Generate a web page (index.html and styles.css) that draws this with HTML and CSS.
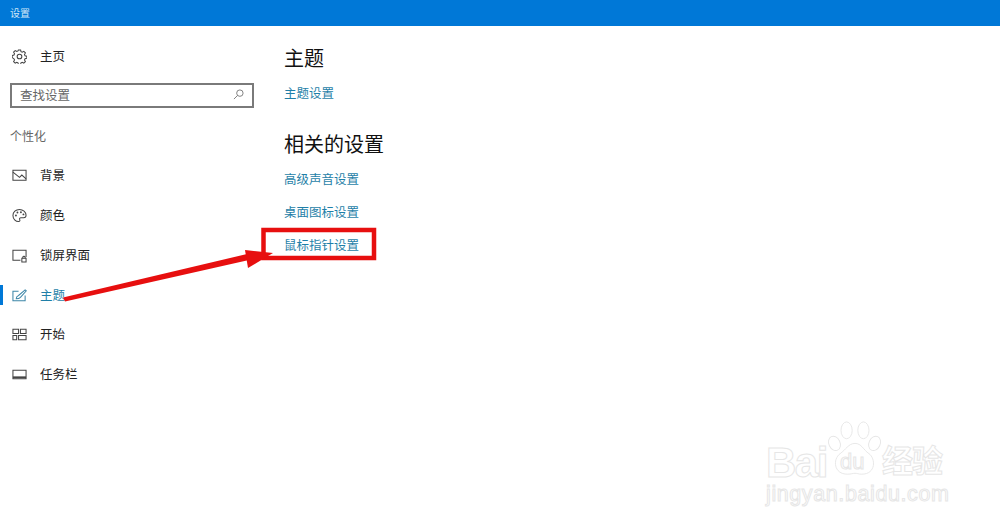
FILE: index.html
```html
<!DOCTYPE html>
<html>
  <head>
    <meta charset="utf-8" />
    <link rel="stylesheet" href="styles.css">
  </head>
  <body>
    <div class="titlebar">设置</div>

    <div class="main">
      <div class="sidebar">
        <div class="nav-item home">
          <svg class="nav-icon" viewBox="0 0 16 16"><circle cx="8" cy="8" r="2.5"/><path d="M6.8 1h2.400l.4 1.900 1.300.6 1.700-1 1.700 1.700-1 1.700.6 1.300 1.900.4v2.400l-1.900.4-.6 1.300 1 1.700-1.700 1.700-1.700-1-1.300.6-.4 1.900H6.800l-.4-1.900-1.300-.6-1.700 1-1.700-1.700 1-1.700-.6-1.300L.2 9.200V6.800l1.900-.4.6-1.300-1-1.700 1.700-1.700 1.700 1 1.300-.6z"/></svg>
          <span>主页</span>
        </div>

        <div class="search-box">
          <span>查找设置</span>
          <svg class="search-icon" viewBox="0 0 12 12"><circle cx="7.500" cy="4.500" r="3.500"/><path d="M5 7 1 11"/></svg>
        </div>

        <div class="group-label">个性化</div>

        <div class="nav-item">
          <svg class="nav-icon" viewBox="0 0 16 16"><path d="M1 2.500h14v10.500H1z"/><path d="M1 4.500 8 10l2.500-2.500 4.500 4"/></svg>
          <span>背景</span>
        </div>
        <div class="nav-item">
          <svg class="nav-icon" viewBox="0 0 16 16"><path d="M8 1.500C4 1.500 1 4.300 1 8s2.900 6.500 6 6.500c1.500 0 1.700-1.200 1.200-2.200-.5-1.100.2-2 1.300-2h3c1.500 0 2.500-1 2.500-2.600 0-3.400-3.300-6.200-7-6.200z"/><circle class="dot" cx="4.200" cy="8" r="1"/><circle class="dot" cx="5.800" cy="4.800" r="1"/><circle class="dot" cx="9.500" cy="4.500" r="1"/><circle class="dot" cx="12.200" cy="6.800" r="1"/></svg>
          <span>颜色</span>
        </div>
        <div class="nav-item">
          <svg class="nav-icon" viewBox="0 0 16 16"><path d="M9 13H1V2.500h14v7"/><path d="M10.500 11h4.500v4h-4.500z"/><path d="M11.500 11V9.800a1.300 1.300 0 0 1 2.500 0V11"/></svg>
          <span>锁屏界面</span>
        </div>
        <div class="nav-item active">
          <svg class="nav-icon" viewBox="0 0 16 16"><path d="M7 3.500H1v10h13V8"/><path d="M4.500 11.500c0-2 1-3 2.500-3.500l7-6 1.300 1-6.300 7c-1 1-2.500 1.500-4.500 1.500z"/></svg>
          <span>主题</span>
        </div>
        <div class="nav-item">
          <svg class="nav-icon" viewBox="0 0 16 16"><path d="M1 2.500h6v4.500H1zM9 2.500h6v4.500H9zM1 9h4v4.500H1zM7 9h8v4.500H7z"/></svg>
          <span>开始</span>
        </div>
        <div class="nav-item">
          <svg class="nav-icon" viewBox="0 0 16 16"><path d="M1 3.500h14v9H1z"/><path class="thick" d="M1 11h14"/></svg>
          <span>任务栏</span>
        </div>
      </div>

      <div class="content">
        <h2>主题</h2>
        <a class="link">主题设置</a>

        <h2 class="related">相关的设置</h2>
        <a class="link">高级声音设置</a>
        <a class="link">桌面图标设置</a>
        <a class="link">鼠标指针设置</a>
      </div>
    </div>

    <!-- red annotation drawn over the page -->
    <svg class="annotation" viewBox="0 0 1000 526">
      <rect x="263.500" y="230" width="110.500" height="28" fill="none" stroke="#e70f0f" stroke-width="4.500"/>
      <path d="M63 297.500 247 254 249 260 65 301.500z" fill="#e70f0f"/>
      <path d="M245 250 273 253 248 268z" fill="#e70f0f"/>
    </svg>

    <div class="watermark">
      <div class="wm-top">
        <span class="wm-bai">Bai</span>
        <svg class="wm-paw" viewBox="0 0 60 62">
          <ellipse cx="8" cy="25" rx="6" ry="8" transform="rotate(-25 8 25)"/>
          <ellipse cx="21" cy="11" rx="6" ry="9"/>
          <ellipse cx="39" cy="11" rx="6" ry="9"/>
          <ellipse cx="51" cy="25" rx="6" ry="8" transform="rotate(25 51 25)"/>
          <path d="M30 25c7 0 9 7 15 11 7 5 8 22-8 22-3 0-5-1-7-1s-4 1-8 1C7 58 6 42 14 36c6-4 9-11 16-11z"/>
        </svg>
        <span class="wm-du">du</span>
        <span class="wm-cn">经验</span>
      </div>
      <div class="wm-url">jingyan.baidu.com</div>
    </div>
  </body>
</html>
```

FILE: styles.css
```css
html,
body {
  height: 100%;
}

body {
  position: relative;
  margin: 0;
  overflow: hidden;
  font-family: "Noto Sans CJK SC", "Liberation Sans", sans-serif;
  font-size: 12.5px;
  background: white;
  color: #222;
}

.titlebar {
  height: 26px;
  padding-left: 10px;
  box-sizing: border-box;
  background: #0078d7;
  color: #cfe6f7;
  font-size: 10px;
  line-height: 26px;
}

.main {
  display: flex;
}

/* Sidebar */
.sidebar {
  width: 284px;
  box-sizing: border-box;
}

.nav-item {
  display: flex;
  align-items: center;
  height: 40px;
  padding-left: 12px;
  box-sizing: border-box;
}

.nav-item span {
  margin-left: 13px;
  line-height: 40px;
}

.nav-item.home {
  height: 20px;
  margin: 20px 0 17px;
}

.nav-icon {
  width: 15px;
  height: 15px;
  flex: none;
  fill: none;
  stroke: #444;
  stroke-width: 1.1;
}

.nav-icon .dot {
  fill: #444;
  stroke: none;
}

.nav-icon .thick {
  stroke-width: 2;
}

.nav-item.active {
  position: relative;
  margin-bottom: -1px;
  color: #1f7fa8;
}

.nav-item.active .nav-icon {
  stroke: #3d86a8;
}

.nav-item.active::before {
  content: "";
  position: absolute;
  left: 0;
  top: 10px;
  width: 3px;
  height: 20px;
  background: #0078d7;
}

.search-box {
  display: flex;
  align-items: center;
  justify-content: space-between;
  width: 244px;
  height: 25px;
  margin-left: 10px;
  padding: 0 8px 2px 8px;
  box-sizing: border-box;
  border: 2px solid #7a7a7a;
  color: #666;
}

.search-icon {
  width: 11px;
  height: 11px;
  fill: none;
  stroke: #777;
  stroke-width: 1;
}

.group-label {
  margin: 19px 0 10px 10px;
  color: #666;
  font-size: 12px;
  line-height: 18px;
}

/* Content */
.content {
  display: flex;
  flex-direction: column;
  align-items: flex-start;
  padding-top: 17px;
}

.content h2 {
  margin: 0 0 10px 0;
  font-size: 20px;
  font-weight: 400;
  line-height: 30px;
  color: #111;
}

.content h2.related {
  margin-top: 13px;
}

.link {
  height: 33px;
  line-height: 20px;
  color: #1f7fa8;
}

/* Annotation */
.annotation {
  position: absolute;
  left: 0;
  top: 0;
  width: 1000px;
  height: 526px;
}

/* Watermark */
.watermark {
  position: absolute;
  left: 766px;
  top: 418px;
  width: 190px;
  color: white;
  -webkit-text-stroke: 1px #e6e6e6;
  font-family: "Liberation Sans", sans-serif;
}

.wm-top {
  position: relative;
  display: flex;
  align-items: flex-end;
  height: 63px;
}

.wm-bai {
  margin-bottom: -4px;
  font-size: 42px;
  font-weight: 700;
  line-height: 44px;
  letter-spacing: -1.5px;
}

.wm-paw {
  position: absolute;
  left: 61px;
  top: 0;
  width: 56px;
  height: 62px;
  fill: white;
  stroke: #e6e6e6;
  stroke-width: 1;
}

.wm-du {
  position: absolute;
  left: 74px;
  top: 32px;
  font-size: 22px;
  line-height: 24px;
}

.wm-cn {
  position: absolute;
  left: 116px;
  top: 21px;
  font-family: "Noto Sans CJK SC", sans-serif;
  font-size: 31px;
  font-weight: 700;
  line-height: 40px;
  letter-spacing: -1px;
}

.wm-url {
  font-size: 21.5px;
  line-height: 26px;
  letter-spacing: .6px;
}
```
